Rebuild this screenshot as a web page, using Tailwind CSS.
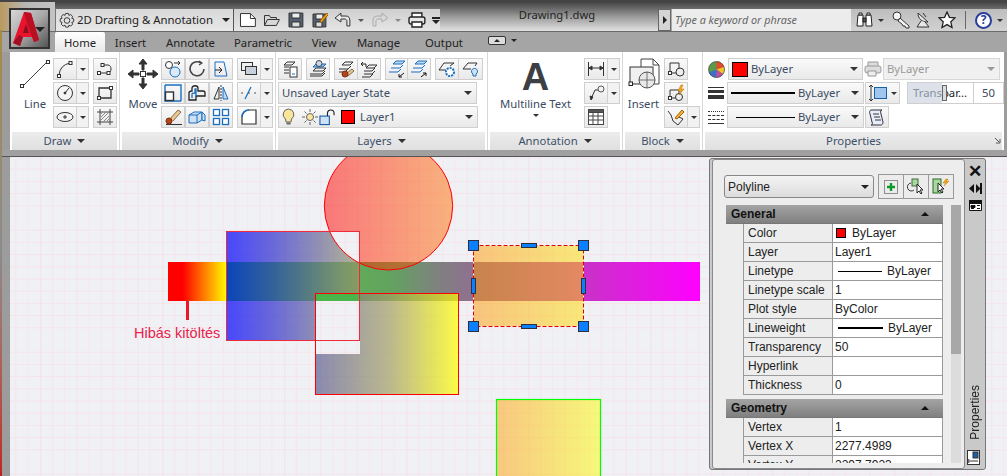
<!DOCTYPE html>
<html><head><meta charset="utf-8"><script src="https://cdn.jsdelivr.net/npm/@tailwindcss/browser@4"></script></head>
<body class="overflow-hidden bg-[#9c9c9c]">
<div class="relative w-[1007px] h-[476px] overflow-hidden flex flex-col font-['Noto_Sans','Liberation_Sans',sans-serif] text-[11.3px] text-[#222]">

<!-- title bar -->
<div class="h-[32px] flex items-end border-t-2 border-b border-[#444] border-b-[#6a6a6a] bg-linear-to-b from-[#444] via-[#9a9a9a] to-[#e2e2e2] shrink-0">
  <div class="w-[55px] h-[29px] bg-linear-to-r from-[#b89a60] via-[#b8b8b8] to-[#c4c4c4] shrink-0"></div>
  <div class="w-[178px] h-[22px] flex items-center bg-linear-to-b from-[#d8d8d8] to-[#e8e8e8] border-l border-[#777] pl-[3px] text-[11.4px] text-[#222] shrink-0">
    <svg class="w-[16px] h-[17px] mr-[2px]" viewBox="0 0 17 17" fill="none" stroke="#333"><path d="M7 1h3l.5 2 2-.8 2 2-.9 2 2 .6v3l-2 .6.9 2-2 2-2-.9-.5 2H7l-.6-2-2 .9-2-2 .9-2-2-.6v-3l2-.6-.9-2 2-2 2 .8z"/><circle cx="8.5" cy="8.5" r="3"/></svg>
    <span class="flex-1 whitespace-nowrap">2D Drafting &amp; Annotation</span>
    <span class="w-0 h-0 border-x-4 border-x-transparent border-t-4 border-t-[#222] mr-[3px]"></span>
  </div>
  <div class="w-[207px] h-[22px] flex items-center gap-[6px] pl-[5px] bg-linear-to-b from-[#cfcfcf] to-[#e6e6e6] border-l border-[#555] shrink-0">
    <svg class="w-[18px] h-[18px]" viewBox="0 0 18 18" fill="#fff" stroke="#333"><path d="M1.5 2.5h10l5 5v8h-15z"/><path d="M11.5 2.5v5h5" fill="none"/></svg>
    <svg class="w-[18px] h-[18px]" viewBox="0 0 18 18" fill="#d8d8d8" stroke="#333"><path d="M1.5 14.5v-10h5l1 2h6v2"/><path d="M1.5 14.5l3-6h12l-3 6z"/></svg>
    <svg class="w-[18px] h-[18px]" viewBox="0 0 18 18" fill="#556070" stroke="#333"><path d="M2 2h14v14H2z"/><path d="M5 2h8v5H5z" fill="#eee"/><path d="M5 11h8v5H5z" fill="#ddd"/></svg>
    <svg class="w-[18px] h-[18px]" viewBox="0 0 18 18" fill="#556070" stroke="#333"><path d="M2 3h13v13H2z"/><path d="M5 3h7v5H5z" fill="#eee"/><path d="M5 11h6v5H5z" fill="#ddd"/><path d="M9 10l7-8 1.5 1.5-7 8z" fill="#f2a21a" stroke="#a06000"/></svg>
    <svg class="w-[18px] h-[16px]" viewBox="0 0 18 16" fill="#e8e8e8" stroke="#333"><path d="M1 6l6-5v3h5c3 0 4 2 4 5v5h-3V9c0-1-1-2-2-2H7v3z"/></svg>
    <span class="w-0 h-0 border-x-[3px] border-x-transparent border-t-[3px] border-t-[#555]"></span>
    <svg class="w-[18px] h-[16px] ml-[1px]" viewBox="0 0 18 16" fill="none" stroke="#aaa"><path d="M17 6l-6-5v3H6C3 4 2 6 2 9v5h3V9c0-1 1-2 2-2h4v3z"/></svg>
    <span class="w-0 h-0 border-x-[3px] border-x-transparent border-t-[3px] border-t-[#888]"></span>
    <svg class="w-[18px] h-[17px] ml-[1px]" viewBox="0 0 18 17" fill="#fff" stroke="#222" stroke-width="1.4"><path d="M4 5V1h10v4"/><rect x="1" y="5" width="16" height="7" rx="2" fill="#e8e8e8"/><path d="M4 10h10v5H4z"/></svg>
    <span class="flex flex-col items-center gap-[1px]"><span class="w-[8px] h-[2px] bg-[#222]"></span><span class="w-0 h-0 border-x-4 border-x-transparent border-t-4 border-t-[#222]"></span></span>
  </div>
  <div class="w-[218px] h-full flex justify-center items-center pb-[3px] pl-[16px] text-[11.2px] text-[#222] shrink-0">Drawing1.dwg</div>
  <div class="w-[13px] h-[22px] flex items-center justify-center bg-[#d4d4d4] border border-[#666] shrink-0"><span class="w-0 h-0 border-y-4 border-y-transparent border-l-4 border-l-[#222]"></span></div>
  <div class="w-[180px] h-[22px] flex items-center pl-[3px] bg-[#ececec] border-l border-[#aaa] italic text-[#666] text-[10.8px] shrink-0">Type a keyword or phrase</div>
  <div class="flex-1 h-[22px] flex items-center gap-[5px] pl-[5px] bg-linear-to-b from-[#bdbdbd] to-[#d2d2d2]">
    <svg class="w-[17px] h-[16px]" viewBox="0 0 17 16" fill="#fff" stroke="#222"><path d="M2 3h5v11H1zM10 3h5l1 11h-6z"/><path d="M7 6h3v4H7z" fill="#555"/><path d="M3 1h3v2H3zM11 1h3v2h-3z"/></svg>
    <span class="w-0 h-0 border-x-[3px] border-x-transparent border-t-[3px] border-t-[#333]"></span>
    <svg class="w-[18px] h-[18px] ml-[3px]" viewBox="0 0 18 18" fill="#f4f4f4" stroke="#333"><circle cx="5" cy="5" r="4"/><path d="M8 7l9 8v2h-3l-1-2-2 0-1-2-4-3z"/></svg>
    <svg class="w-[18px] h-[18px]" viewBox="0 0 18 18" fill="#e8e8e8" stroke="#333"><path d="M3 2c0 6 4 9 10 9z"/><path d="M8 2l3 4M6 10l-4 6h12l-4-5"/></svg>
    <svg class="w-[18px] h-[18px]" viewBox="0 0 18 18" fill="#fff" stroke="#222" stroke-width="1.3"><path d="M9 1l2.4 5.3 5.6.6-4.2 3.9 1.2 5.7L9 13.6l-5 2.9 1.2-5.7L1 6.9l5.6-.6z"/></svg>
    <span class="w-[1px] h-[18px] bg-[#666] mx-[4px]"></span>
    <span class="w-[17px] h-[17px] rounded-full border-2 border-[#2a3c9c] bg-white flex items-center justify-center text-[12px] font-bold text-[#2a3c9c] leading-none">?</span>
    <span class="w-0 h-0 border-x-[3px] border-x-transparent border-t-[3px] border-t-[#333]"></span>
  </div>
</div>

<!-- logo -->
<div class="absolute left-[9px] top-[8px] w-[41px] h-[41px] border-2 border-[#333] bg-linear-to-br from-[#d8d8d8] via-[#a8a8a8] to-[#555]">
  <svg class="absolute left-[2px] top-[1px] w-[27px] h-[36px]" viewBox="0 0 27 36"><path d="M11 1L0 32l7 3 3-9h9l2 5 5-2L18 2z" fill="#e8142c"/><path d="M11 1l7 1 8 27-5 2L13 9z" fill="#b80f22"/><path d="M13 13l3 9h-6z" fill="#8a0f1c"/><path d="M0 32l7 3 3-9-4-2z" fill="#a01024"/></svg>
  <span class="absolute right-[3px] top-[17px] w-0 h-0 border-x-[5px] border-x-transparent border-t-[5px] border-t-[#222]"></span>
</div>

<!-- tabs -->
<div class="h-[20px] flex items-end bg-[#a5a5a5] text-[#222] text-[11.3px] shrink-0 pl-[55px]">
  <div class="w-[50px] h-[20px] pt-[3px] flex items-center justify-center bg-linear-to-b from-white to-[#e8e8e8] rounded-t-[2px]">Home</div>
  <div class="w-[51px] h-[20px] pt-[3px] flex items-center justify-center">Insert</div>
  <div class="w-[69px] h-[20px] pt-[3px] flex items-center justify-center">Annotate</div>
  <div class="w-[76px] h-[20px] pt-[3px] flex items-center justify-center">Parametric</div>
  <div class="w-[46px] h-[20px] pt-[3px] flex items-center justify-center">View</div>
  <div class="w-[63px] h-[20px] pt-[3px] flex items-center justify-center">Manage</div>
  <div class="w-[68px] h-[20px] pt-[3px] flex items-center justify-center">Output</div>
  <div class="ml-[10px] mb-[6px] w-[10px] h-[8px]"></div>
  <div class="mb-[7px] flex items-center gap-[5px] -ml-[10px]"><span class="w-[18px] h-[9px] rounded-[2px] bg-[#ddd] border border-[#333] flex items-center justify-center"><span class="w-0 h-0 border-x-[3px] border-x-transparent border-b-[3px] border-b-[#222]"></span></span><span class="w-0 h-0 border-x-[3px] border-x-transparent border-t-[3px] border-t-[#222]"></span></div>
</div>

<!-- ribbon -->
<div class="h-[98px] flex pl-[10px] pr-[4px] shrink-0">
  <div class="flex-1 flex bg-white">
  <!-- Draw -->
  <div class="w-[110px] flex flex-col border-r border-[#d8d8d8]">
    <div class="h-[80px] flex pt-[6px] pl-[7px]">
      <div class="w-[36px] flex flex-col items-center">
        <svg class="w-[32px] h-[32px]" viewBox="0 0 32 32" fill="#fff" stroke="#333"><path d="M3 29L29 3" stroke="#444" fill="none"/><rect x="1.5" y="26.5" width="3" height="3"/><rect x="27.5" y="2.5" width="3" height="3"/></svg>
        <span class="mt-[6px] text-[11.3px] text-[#3a4b62]">Line</span>
      </div>
      <div class="flex flex-col gap-[2px]">
        <div class="flex h-[22px]"><div class="w-[24px] flex items-center justify-center border border-[#cfcfcf] bg-linear-to-b from-[#fafafa] to-[#e9e9e9]"><svg class="w-[18px] h-[18px]" viewBox="0 0 18 18" fill="#fff" stroke="#333"><path d="M3 15Q4 5 14 3" fill="none"/><rect x="1.5" y="14.5" width="3" height="3"/><rect x="13" y="1.5" width="3" height="3"/></svg></div><div class="w-[12px] flex items-center justify-center border border-l-0 border-[#cfcfcf] bg-[#f2f2f2]"><span class="w-0 h-0 border-x-[3px] border-x-transparent border-t-[3px] border-t-[#333]"></span></div></div>
        <div class="flex h-[22px]"><div class="w-[24px] flex items-center justify-center border border-[#cfcfcf] bg-linear-to-b from-[#fafafa] to-[#e9e9e9]"><svg class="w-[18px] h-[18px]" viewBox="0 0 18 18" fill="#fff" stroke="#333"><circle cx="9" cy="9" r="7.5" fill="#f4f4f4"/><path d="M9 9l4-5" /><circle cx="9" cy="9" r="1" fill="#333"/></svg></div><div class="w-[12px] flex items-center justify-center border border-l-0 border-[#cfcfcf] bg-[#f2f2f2]"><span class="w-0 h-0 border-x-[3px] border-x-transparent border-t-[3px] border-t-[#333]"></span></div></div>
        <div class="flex h-[22px]"><div class="w-[24px] flex items-center justify-center border border-[#cfcfcf] bg-linear-to-b from-[#fafafa] to-[#e9e9e9]"><svg class="w-[18px] h-[18px]" viewBox="0 0 18 18" fill="#fff" stroke="#333"><ellipse cx="9" cy="9" rx="8" ry="4.5" fill="#f4f4f4"/><path d="M7 9h4M9 7v4"/></svg></div><div class="w-[12px] flex items-center justify-center border border-l-0 border-[#cfcfcf] bg-[#f2f2f2]"><span class="w-0 h-0 border-x-[3px] border-x-transparent border-t-[3px] border-t-[#333]"></span></div></div>
      </div>
      <div class="flex flex-col gap-[2px] ml-[4px]">
        <div class="w-[24px] h-[22px] flex items-center justify-center border border-[#cfcfcf] bg-linear-to-b from-[#fafafa] to-[#e9e9e9]"><svg class="w-[18px] h-[18px]" viewBox="0 0 18 18" fill="#fff" stroke="#333"><path d="M3 13h9c4 0 4-8 0-8H7" fill="none"/><rect x="1.5" y="11.5" width="3" height="3"/><rect x="11" y="11.5" width="3" height="3"/><rect x="5" y="3.5" width="3" height="3"/></svg></div>
        <div class="w-[24px] h-[22px] flex items-center justify-center border border-[#cfcfcf] bg-linear-to-b from-[#fafafa] to-[#e9e9e9]"><svg class="w-[18px] h-[18px]" viewBox="0 0 18 18" fill="#fff" stroke="#333"><path d="M3 4h12v10H3z" stroke-width="1.3" fill="none"/><rect x="1.5" y="12.5" width="3" height="3"/><rect x="13.5" y="2.5" width="3" height="3"/></svg></div>
        <div class="w-[24px] h-[22px] flex items-center justify-center border border-[#cfcfcf] bg-linear-to-b from-[#fafafa] to-[#e9e9e9]"><svg class="w-[18px] h-[18px]" viewBox="0 0 18 18" fill="none" stroke="#444"><path d="M1 4h16M1 14h16M4 1v16M14 1v16"/><path d="M5 12l8-8M5 9l5-5M8 13l5-5M11 13l2-2M5 6l1-1" stroke="#888"/></svg></div>
      </div>
    </div>
    <div class="h-[18px] mx-[2px] flex items-center justify-center gap-[6px] bg-linear-to-b from-[#ececec] to-[#e0e0e0] text-[11.3px] text-[#3d5068]">Draw <span class="w-0 h-0 border-x-[4px] border-x-transparent border-t-[4px] border-t-[#333]"></span></div>
  </div>
  <!-- Modify -->
  <div class="w-[156px] flex flex-col border-r border-[#d8d8d8]">
    <div class="h-[80px] flex pt-[6px] pl-[5px]">
      <div class="w-[36px] flex flex-col items-center">
        <svg class="w-[32px] h-[32px]" viewBox="0 0 32 32" fill="#333" stroke="#333"><path d="M16 1l4 5h-3v6h-2V6h-3zM16 31l4-5h-3v-6h-2v6h-3zM1 16l5-4v3h6v2H6v3zM31 16l-5-4v3h-6v2h6v3z"/><rect x="13.5" y="13.5" width="5" height="5" fill="#fff"/></svg>
        <span class="mt-[6px] text-[11.3px] text-[#3a4b62]">Move</span>
      </div>
      <div class="grid grid-cols-[24px_24px_24px] grid-rows-[22px_22px_22px] gap-y-[2px]">
        <div class="flex items-center justify-center border border-[#cfcfcf] bg-linear-to-b from-[#fafafa] to-[#e9e9e9]"><svg class="w-[18px] h-[18px]" viewBox="0 0 18 18" fill="#fff" stroke="#333"><circle cx="5" cy="5" r="3.5"/><circle cx="11" cy="12" r="5" stroke="#1a6fc0" fill="#dce9f8"/><path d="M10 3h6l-2-2M16 3l-2 2" fill="none"/></svg></div>
        <div class="flex items-center justify-center border border-[#cfcfcf] bg-linear-to-b from-[#fafafa] to-[#e9e9e9]"><svg class="w-[18px] h-[18px]" viewBox="0 0 18 18" fill="none" stroke="#444" stroke-width="1.6"><path d="M13 3a7 7 0 1 0 3 6"/><path d="M11 1l3 2-3 2" stroke-width="1.2"/></svg></div>
        <div class="flex items-center justify-center border border-[#cfcfcf] bg-linear-to-b from-[#fafafa] to-[#e9e9e9]"><svg class="w-[18px] h-[18px]" viewBox="0 0 18 18" fill="none" stroke="#1a6fc0"><path d="M3 2h9l3 14H3z"/><path d="M3 10h7M7 7l3 3-3 3" stroke="#222"/></svg></div>
        <div class="flex items-center justify-center border border-[#cfcfcf] bg-linear-to-b from-[#fafafa] to-[#e9e9e9]"><svg class="w-[18px] h-[18px]" viewBox="0 0 18 18" fill="none" stroke="#1a6fc0" stroke-width="1.4"><path d="M1 1h16v16"/><path d="M1 1v16h16" stroke="#1a6fc0"/><rect x="1.5" y="8" width="8" height="8.5" stroke="#333" fill="#fff"/></svg></div>
        <div class="flex items-center justify-center border border-[#cfcfcf] bg-linear-to-b from-[#fafafa] to-[#e9e9e9]"><svg class="w-[18px] h-[18px]" viewBox="0 0 18 18" fill="none" stroke="#222" stroke-width="1.3"><path d="M1 16V9c0-2 3-2 3-2V4c0-3 6-3 6 0v3h5c2 0 2 2 2 2v3H8v4z"/><path d="M4 14v-4c0-1 3-1 3-1V5h1v7" stroke="#1a6fc0"/></svg></div>
        <div class="flex items-center justify-center border border-[#cfcfcf] bg-linear-to-b from-[#fafafa] to-[#e9e9e9]"><svg class="w-[18px] h-[18px]" viewBox="0 0 18 18" fill="none" stroke="#333"><path d="M9 1v16" stroke-dasharray="2 1"/><path d="M7 3v12H2z"/><path d="M11 3v12h5z" stroke="#1a6fc0" fill="#bcd6f0"/></svg></div>
        <div class="flex items-center justify-center border border-[#cfcfcf] bg-linear-to-b from-[#fafafa] to-[#e9e9e9]"><svg class="w-[20px] h-[18px]" viewBox="0 0 20 18" fill="none" stroke="#333"><path d="M3 16.5h16"/><path d="M6 12L15 2l3 2-8 9" fill="#e7c89a" stroke="#8a6a3a"/><circle cx="6" cy="13" r="3" fill="#b5461a" stroke="#7a3010"/></svg></div>
        <div class="flex items-center justify-center border border-[#cfcfcf] bg-linear-to-b from-[#fafafa] to-[#e9e9e9]"><svg class="w-[18px] h-[18px]" viewBox="0 0 18 18" fill="#cfe0f3" stroke="#1a6fc0"><path d="M1 7l5-3h8v8l-5 3H1z"/><path d="M1 7h8v8M9 7l5-3" fill="none"/><path d="M14 4l3 3v6l-3-1z"/></svg></div>
        <div class="flex items-center justify-center border border-[#cfcfcf] bg-linear-to-b from-[#fafafa] to-[#e9e9e9]"><svg class="w-[18px] h-[18px]" viewBox="0 0 18 18" fill="#fff" stroke="#1a6fc0" stroke-width="1.3"><rect x="1.5" y="1.5" width="6" height="6"/><rect x="10.5" y="1.5" width="6" height="6"/><rect x="1.5" y="10.5" width="6" height="6"/><rect x="10.5" y="10.5" width="6" height="6"/></svg></div>
      </div>
      <div class="flex flex-col gap-[2px] ml-[4px]">
        <div class="flex h-[22px]"><div class="w-[24px] flex items-center justify-center border border-[#cfcfcf] bg-linear-to-b from-[#fafafa] to-[#e9e9e9]"><svg class="w-[18px] h-[18px]" viewBox="0 0 18 18" fill="#c8d0da" stroke="#333"><rect x="1.5" y="2.5" width="11" height="8" fill="#eee"/><rect x="5.5" y="6.5" width="11" height="8"/></svg></div><div class="w-[12px] flex items-center justify-center border border-l-0 border-[#cfcfcf] bg-[#f2f2f2]"><span class="w-0 h-0 border-x-[3px] border-x-transparent border-t-[3px] border-t-[#333]"></span></div></div>
        <div class="flex h-[22px]"><div class="w-[24px] flex items-center justify-center border border-[#cfcfcf] bg-linear-to-b from-[#fafafa] to-[#e9e9e9]"><svg class="w-[18px] h-[18px]" viewBox="0 0 18 18" fill="none" stroke="#1a6fc0"><path d="M1 9h3M14 9h3M8 9h2" stroke="#555" stroke-dasharray="2 1"/><path d="M5 15L11 3" stroke-width="1.3"/></svg></div><div class="w-[12px] flex items-center justify-center border border-l-0 border-[#cfcfcf] bg-[#f2f2f2]"><span class="w-0 h-0 border-x-[3px] border-x-transparent border-t-[3px] border-t-[#333]"></span></div></div>
        <div class="flex h-[22px]"><div class="w-[24px] flex items-center justify-center border border-[#cfcfcf] bg-linear-to-b from-[#fafafa] to-[#e9e9e9]"><svg class="w-[18px] h-[18px]" viewBox="0 0 18 18" fill="#fff" stroke="#333" stroke-width="1.2"><path d="M2 16V9c0-4 3-7 7-7h7v14z" fill="#fff"/><path d="M2 9c0-4 3-7 7-7" stroke="#1a6fc0" stroke-width="1.6" fill="none"/></svg></div><div class="w-[12px] flex items-center justify-center border border-l-0 border-[#cfcfcf] bg-[#f2f2f2]"><span class="w-0 h-0 border-x-[3px] border-x-transparent border-t-[3px] border-t-[#333]"></span></div></div>
      </div>
    </div>
    <div class="h-[18px] mx-[2px] flex items-center justify-center gap-[6px] bg-linear-to-b from-[#ececec] to-[#e0e0e0] text-[11.3px] text-[#3d5068]">Modify <span class="w-0 h-0 border-x-[4px] border-x-transparent border-t-[4px] border-t-[#333]"></span></div>
  </div>
  <!-- Layers -->
  <div class="w-[212px] flex flex-col border-r border-[#d8d8d8]">
    <div class="h-[80px] flex flex-col gap-[2px] pt-[6px] pl-[2px]">
      <div class="flex h-[22px] gap-[4px]">
        <div class="w-[24px] flex items-center justify-center border border-[#cfcfcf] bg-linear-to-b from-[#fafafa] to-[#e9e9e9]"><svg class="w-[18px] h-[18px]" viewBox="0 0 18 18" fill="none" stroke="#333"><path d="M6 2h8l-3 3H3zM3 7h5M3 10h5M3 13h5"/><rect x="9" y="7" width="7" height="10" fill="#fff"/><path d="M11 14h3" stroke="#1a6fc0"/></svg></div>
        <div class="w-[24px] flex items-center justify-center border border-[#cfcfcf] bg-linear-to-b from-[#fafafa] to-[#e9e9e9]"><svg class="w-[18px] h-[18px]" viewBox="0 0 18 18" fill="none" stroke="#333"><path d="M4 11h10l3-3H7zM1 14h12l3-3M1 16h12l3-3"/><path d="M4 7h10l3-3H7z" fill="#8ec0ea" stroke="#1a6fc0"/><circle cx="10" cy="3.5" r="3" fill="#cfd8e2" stroke="#445"/></svg></div>
        <div class="flex">
          <div class="w-[24px] flex items-center justify-center border border-[#cfcfcf] bg-linear-to-b from-[#fafafa] to-[#e9e9e9]"><svg class="w-[18px] h-[18px]" viewBox="0 0 18 18" fill="none" stroke="#333"><path d="M5 5h8l3-3H8zM2 9h9l3-3M2 12h6l3-3"/><path d="M9 14l6-5 2 2-6 5z" fill="#e7c89a" stroke="#8a6a3a"/><circle cx="8" cy="14" r="3" fill="#b5461a" stroke="#7a3010"/></svg></div>
          <div class="w-[23px] flex items-center justify-center border border-l-0 border-[#cfcfcf] bg-linear-to-b from-[#fafafa] to-[#e9e9e9]"><svg class="w-[18px] h-[18px]" viewBox="0 0 18 18" fill="none" stroke="#333"><path d="M6 8h8l3-3H9zM4 11h8l3-3M4 14h8l3-3M2 17h8l3-3"/><path d="M1 4h5M1 4l2-2M1 4l2 2M6 4v3" stroke="#222"/></svg></div>
        </div>
        <div class="flex">
          <div class="w-[23px] flex items-center justify-center border border-[#cfcfcf] bg-linear-to-b from-[#fafafa] to-[#e9e9e9]"><svg class="w-[18px] h-[18px]" viewBox="0 0 18 18" fill="none" stroke="#333"><path d="M5 4h9l3-3H8z" stroke="#1a6fc0" fill="#bcd6f0"/><path d="M3 8h9l3-3" stroke="#1a6fc0"/><path d="M1 12h9l3-3" stroke="#1a6fc0"/><path d="M11 17l5-4M11 14v3h3" stroke="#111"/></svg></div>
          <div class="w-[23px] flex items-center justify-center border border-l-0 border-[#cfcfcf] bg-linear-to-b from-[#fafafa] to-[#e9e9e9]"><svg class="w-[18px] h-[18px]" viewBox="0 0 18 18" fill="none" stroke="#333"><path d="M5 4h9l3-3H8z" stroke="#1a6fc0" fill="#bcd6f0"/><path d="M3 8h9l3-3" stroke="#1a6fc0"/><path d="M1 12h9l3-3" stroke="#1a6fc0"/><path d="M11 17l5-4M13 13h3v3" stroke="#111"/></svg></div>
        </div>
        <div class="flex">
          <div class="w-[24px] flex items-center justify-center border border-[#cfcfcf] bg-linear-to-b from-[#fafafa] to-[#e9e9e9]"><svg class="w-[18px] h-[18px]" viewBox="0 0 18 18" fill="none" stroke="#333"><path d="M1 10L6 3h10l-4 3"/><path d="M1 10h7"/><circle cx="12" cy="12" r="4" stroke="#1a6fc0" stroke-width="2" stroke-dasharray="2 1" fill="#fff"/></svg></div>
          <div class="w-[24px] flex items-center justify-center border border-l-0 border-[#cfcfcf] bg-linear-to-b from-[#fafafa] to-[#e9e9e9]"><svg class="w-[18px] h-[18px]" viewBox="0 0 18 18" fill="none" stroke="#333"><path d="M1 9l5-6h9l-2 3"/><path d="M1 9h8"/><path d="M11 14a3 3 0 1 1 3 0v2h-3z" stroke="#1a6fc0" fill="#cfe2f5"/></svg></div>
        </div>
      </div>
      <div class="w-[199px] h-[22px] flex items-center justify-between pl-[3px] pr-[4px] border border-[#cfcfcf] bg-linear-to-b from-[#fafafa] to-[#e9e9e9] text-[11.3px] text-[#3a4b62]">Unsaved Layer State <span class="w-0 h-0 border-x-[4px] border-x-transparent border-t-[4px] border-t-[#333]"></span></div>
      <div class="w-[200px] h-[22px] flex items-center pl-[3px] pr-[4px] border border-[#cfcfcf] bg-linear-to-b from-[#fafafa] to-[#e9e9e9] text-[11.3px] text-[#3a4b62]">
        <svg class="w-[13px] h-[18px] mr-[7px]" viewBox="0 0 13 18" fill="#f8e59a" stroke="#666"><path d="M6.5 1a5.5 5.5 0 0 1 3 10l-.5 3H4l-.5-3a5.5 5.5 0 0 1 3-10z"/><path d="M4.5 15.5h4" stroke-width="2"/></svg>
        <svg class="w-[16px] h-[16px] mr-[1px]" viewBox="0 0 16 16" fill="#f8e7a0" stroke="#666"><circle cx="8" cy="8" r="3.5"/><path d="M8 0v3M8 13v3M0 8h3M13 8h3M2.5 2.5l2 2M11.5 11.5l2 2M2.5 13.5l2-2M11.5 4.5l2-2"/></svg>
        <svg class="w-[16px] h-[17px] mr-[6px]" viewBox="0 0 17 17" fill="#cfe2f5" stroke="#1a5fa8" stroke-width="1.2"><rect x="1" y="7" width="10" height="9"/><path d="M9 7V4a3 3 0 0 1 7 0v2" fill="none" stroke="#222"/></svg>
        <span class="w-[14px] h-[14px] bg-[#ff0000] border border-black mr-[5px]"></span>
        <span class="flex-1">Layer1</span>
        <span class="w-0 h-0 border-x-[4px] border-x-transparent border-t-[4px] border-t-[#333]"></span>
      </div>
    </div>
    <div class="h-[18px] mx-[2px] flex items-center justify-center gap-[6px] bg-linear-to-b from-[#ececec] to-[#e0e0e0] text-[11.3px] text-[#3d5068]">Layers <span class="w-0 h-0 border-x-[4px] border-x-transparent border-t-[4px] border-t-[#333]"></span></div>
  </div>
  <!-- Annotation -->
  <div class="w-[135px] flex flex-col border-r border-[#d8d8d8]">
    <div class="h-[80px] flex pt-[6px]">
      <div class="w-[95px] flex flex-col items-center">
        <span class="h-[36px] text-[38px] leading-[36px] font-bold text-[#3c3f44] font-['Liberation_Sans',sans-serif] mt-[1px]">A</span>
        <span class="text-[11.3px] text-[#3a4b62] leading-[14px] mt-[2px]">Multiline Text</span>
        <span class="w-0 h-0 border-x-[3px] border-x-transparent border-t-[3px] border-t-[#333] mt-[3px]"></span>
      </div>
      <div class="flex flex-col gap-[2px] ml-[1px]">
        <div class="flex h-[22px]"><div class="w-[24px] flex items-center justify-center border border-[#cfcfcf] bg-linear-to-b from-[#fafafa] to-[#e9e9e9]"><svg class="w-[18px] h-[18px]" viewBox="0 0 18 18" fill="none" stroke="#333"><path d="M1.5 2v14M16.5 2v14M2 8h14"/><path d="M2 8l3-2v4zM16 8l-3-2v4z" fill="#333"/></svg></div><div class="w-[12px] flex items-center justify-center border border-l-0 border-[#cfcfcf] bg-[#f2f2f2]"><span class="w-0 h-0 border-x-[3px] border-x-transparent border-t-[3px] border-t-[#333]"></span></div></div>
        <div class="flex h-[22px]"><div class="w-[24px] flex items-center justify-center border border-[#cfcfcf] bg-linear-to-b from-[#fafafa] to-[#e9e9e9]"><svg class="w-[18px] h-[18px]" viewBox="0 0 18 18" fill="none" stroke="#333"><circle cx="14" cy="5" r="3" stroke="#555"/><path d="M11 6H8L4 15"/><path d="M4 16l-1-4 3 1z" fill="#333"/></svg></div><div class="w-[12px] flex items-center justify-center border border-l-0 border-[#cfcfcf] bg-[#f2f2f2]"><span class="w-0 h-0 border-x-[3px] border-x-transparent border-t-[3px] border-t-[#333]"></span></div></div>
        <div class="w-[24px] h-[22px] flex items-center justify-center border border-[#cfcfcf] bg-linear-to-b from-[#fafafa] to-[#e9e9e9]"><svg class="w-[18px] h-[18px]" viewBox="0 0 18 18" fill="#fff" stroke="#444"><rect x="1.5" y="1.5" width="15" height="15"/><path d="M1.5 1.5h15v3h-15z" fill="#555"/><path d="M1.5 8h15M1.5 12h15M6 4.5v12M11 4.5v12"/></svg></div>
      </div>
    </div>
    <div class="h-[18px] mx-[2px] flex items-center justify-center gap-[6px] bg-linear-to-b from-[#ececec] to-[#e0e0e0] text-[11.3px] text-[#3d5068]">Annotation <span class="w-0 h-0 border-x-[4px] border-x-transparent border-t-[4px] border-t-[#333]"></span></div>
  </div>
  <!-- Block -->
  <div class="w-[80px] flex flex-col border-r border-[#d8d8d8]">
    <div class="h-[80px] flex pt-[6px]">
      <div class="w-[41px] flex flex-col items-center">
        <svg class="w-[32px] h-[32px]" viewBox="0 0 32 32" fill="#fff" stroke="#444"><path d="M13 1h12l6 6v19H13z"/><path d="M25 1v6h6" fill="none"/><rect x="2" y="9" width="23" height="17" fill="#f0f0f0" stroke="#333"/><rect x="1" y="24" width="3.5" height="3.5" stroke="#222"/><circle cx="19" cy="22" r="8" fill="#e8e8e8" stroke="#555"/><path d="M19 14v16M11 22h16" stroke-width=".7"/></svg>
        <span class="mt-[6px] text-[11.3px] text-[#3a4b62]">Insert</span>
      </div>
      <div class="flex flex-col gap-[2px]">
        <div class="w-[24px] h-[22px] flex items-center justify-center border border-[#cfcfcf] bg-linear-to-b from-[#fafafa] to-[#e9e9e9]"><svg class="w-[18px] h-[18px]" viewBox="0 0 18 18" fill="#fff" stroke="#333"><path d="M3 3h9v10H3z" fill="none"/><rect x="1.5" y="11.5" width="3" height="3"/><circle cx="13" cy="12" r="4" fill="#eee"/></svg></div>
        <div class="w-[24px] h-[22px] flex items-center justify-center border border-[#cfcfcf] bg-linear-to-b from-[#fafafa] to-[#e9e9e9]"><svg class="w-[18px] h-[18px]" viewBox="0 0 18 18" fill="#fff" stroke="#333"><path d="M3 6h9v8H3z" fill="none"/><rect x="1.5" y="12.5" width="3" height="3"/><circle cx="12" cy="13" r="3.5" fill="#eee"/><path d="M14 1l-3 6h3l-2 4 5-6h-3l2-4z" fill="#f5a623" stroke="#c47a00" stroke-width=".6"/></svg></div>
        <div class="flex h-[22px]"><div class="w-[24px] flex items-center justify-center border border-[#cfcfcf] bg-linear-to-b from-[#fafafa] to-[#e9e9e9]"><svg class="w-[18px] h-[18px]" viewBox="0 0 18 18" fill="none" stroke="#333"><path d="M1 3l3 4 2 6 5 4 5-6-6-3"/><path d="M8 10l7-8 2 2-7 7z" fill="#f3b33d" stroke="#a06000"/></svg></div><div class="w-[12px] flex items-center justify-center border border-l-0 border-[#cfcfcf] bg-[#f2f2f2]"><span class="w-0 h-0 border-x-[3px] border-x-transparent border-t-[3px] border-t-[#333]"></span></div></div>
      </div>
    </div>
    <div class="h-[18px] mx-[2px] flex items-center justify-center gap-[6px] bg-linear-to-b from-[#ececec] to-[#e0e0e0] text-[11.3px] text-[#3d5068]">Block <span class="w-0 h-0 border-x-[4px] border-x-transparent border-t-[4px] border-t-[#333]"></span></div>
  </div>
  <!-- Properties -->
  <div class="flex-1 flex flex-col">
    <div class="h-[80px] flex flex-col gap-[2px] pt-[6px] pl-[5px]">
      <div class="flex h-[22px] items-center">
        <svg class="w-[17px] h-[17px] mr-[3px] shrink-0" viewBox="0 0 17 17"><circle cx="8.5" cy="8.5" r="8" fill="#5a9a4a"/><path d="M8.5 8.5V.5A8 8 0 0 1 16 6z" fill="#e34a2a"/><path d="M8.5 8.5L16 6a8 8 0 0 1-1 7z" fill="#f4c324"/><path d="M8.5 8.5L15 13a8 8 0 0 1-7 3.5z" fill="#c04ea0"/><path d="M8.5 8.5L8 16.5a8 8 0 0 1-7-5z" fill="#3a6fc8"/><circle cx="8.5" cy="8.5" r="8" fill="none" stroke="#444" stroke-width=".7"/></svg>
        <div class="w-[135px] h-[22px] flex items-center pl-[3px] pr-[4px] border border-[#cfcfcf] bg-linear-to-b from-[#fafafa] to-[#e9e9e9] text-[11.3px] text-[#3a4b62]"><span class="w-[16px] h-[15px] bg-[#ff0000] border border-black mr-[3px]"></span><span class="flex-1">ByLayer</span><span class="w-0 h-0 border-x-[4px] border-x-transparent border-t-[4px] border-t-[#333]"></span></div>
        <svg class="w-[18px] h-[17px] mx-[1px] shrink-0" viewBox="0 0 18 17" fill="#ddd" stroke="#999"><path d="M4 5V1h10v4"/><rect x="1" y="5" width="16" height="7" rx="2"/><path d="M4 10h8v5H4z" fill="#eee"/></svg>
        <div class="w-[117px] h-[22px] flex items-center pl-[3px] pr-[4px] border border-[#d8d8d8] bg-[#f0f0f0] text-[11.3px] text-[#999]"><span class="flex-1">ByLayer</span><span class="w-0 h-0 border-x-[4px] border-x-transparent border-t-[4px] border-t-[#999]"></span></div>
      </div>
      <div class="flex h-[22px] items-center">
        <div class="w-[16px] mr-[3px] flex flex-col gap-[2px] shrink-0"><span class="h-[1px] bg-[#333]"></span><span class="h-[3px] bg-[#333]"></span><span class="h-[4px] bg-[#333]"></span></div>
        <div class="w-[137px] h-[22px] flex items-center pl-[3px] pr-[4px] border border-[#cfcfcf] bg-linear-to-b from-[#fafafa] to-[#e9e9e9] text-[11.3px] text-[#3a4b62]"><span class="w-[64px] h-[2px] bg-black mr-[3px]"></span><span class="flex-1">ByLayer</span><span class="w-0 h-0 border-x-[4px] border-x-transparent border-t-[4px] border-t-[#333]"></span></div>
        <div class="w-[35px] h-[22px] ml-[1px] flex items-center gap-[4px] pl-[3px] border border-[#cfcfcf] bg-linear-to-b from-[#fafafa] to-[#e9e9e9] shrink-0"><svg class="w-[18px] h-[18px]" viewBox="0 0 18 18" fill="#9ec6ee" stroke="#1a5fa8"><rect x="5.5" y="3.5" width="12" height="11"/><path d="M2 1v16M0 3l2-2 2 2M0 15l2 2 2-2" fill="none" stroke="#333"/></svg><span class="w-0 h-0 border-x-[3px] border-x-transparent border-t-[3px] border-t-[#333]"></span></div>
        <div class="w-[97px] h-[22px] ml-[7px] flex border border-[#cfcfcf] bg-white shrink-0"><div class="w-[66px] relative flex items-center bg-[#fff] border-r border-[#cfcfcf] pl-[5px] text-[11.3px] text-[#222] overflow-hidden"><span class="absolute left-0 top-0 bottom-0 w-[34px] bg-[#dde2ea]"></span><span class="relative whitespace-nowrap"><span class="text-[#8a92a0]">Trans</span>par...</span><span class="absolute left-[34px] top-[2px] w-[5px] h-[16px] bg-[#ddd] border border-[#666]"></span></div><div class="flex-1 flex items-center justify-center text-[11.3px] text-[#3a4b62]">50</div></div>
      </div>
      <div class="flex h-[22px] items-center">
        <div class="w-[16px] mr-[3px] flex flex-col gap-[3px] shrink-0"><span class="h-[1px] border-t border-dotted border-[#333]"></span><span class="h-[1px] border-t border-dashed border-[#333]"></span><span class="h-[1px] border-t border-dashed border-[#333]"></span><span class="h-[1px] border-t border-[#333]"></span></div>
        <div class="w-[137px] h-[22px] flex items-center pl-[8px] pr-[4px] border border-[#cfcfcf] bg-linear-to-b from-[#fafafa] to-[#e9e9e9] text-[11.3px] text-[#3a4b62]"><span class="w-[59px] h-[1px] bg-black mr-[3px]"></span><span class="flex-1">ByLayer</span><span class="w-0 h-0 border-x-[4px] border-x-transparent border-t-[4px] border-t-[#333]"></span></div>
        <div class="w-[24px] h-[22px] ml-[1px] flex items-center justify-center border border-[#cfcfcf] bg-linear-to-b from-[#fafafa] to-[#e9e9e9]"><svg class="w-[18px] h-[18px]" viewBox="0 0 18 18" fill="#e8eef5" stroke="#334"><path d="M3 2h11c-1 0-2 1-1 4l2 8c0 2-1 3-2 3H3c1 0 2-1 1-3L2 6C1 4 2 2 3 2z"/><path d="M5 6h6M6 9h6M7 12h6" fill="none"/></svg></div>
      </div>
    </div>
    <div class="h-[18px] mx-[2px] relative flex items-center justify-center bg-linear-to-b from-[#ececec] to-[#e0e0e0] text-[11.3px] text-[#3d5068]">Properties<svg class="absolute right-[1px] top-[5px] w-[7px] h-[7px]" viewBox="0 0 7 7" fill="none" stroke="#555"><path d="M1 1l4 4M6 2v4H2"/></svg></div>
  </div>
  </div>
</div>

<!-- separator -->
<div class="h-[7px] shrink-0 bg-[#a0a0a0] border-b border-[#555]"></div>

<!-- canvas -->
<div class="flex-1 relative ml-[10px] overflow-hidden bg-[#f0f1f5]">
  <svg class="absolute left-0 top-0 w-[997px] h-[319px]" viewBox="10 157 997 319" xmlns="http://www.w3.org/2000/svg">
    <defs>
      <pattern id="grid" patternUnits="userSpaceOnUse" x="40.3" y="96" width="122" height="122">
        <path d="M12.2 0v122M24.4 0v122M36.6 0v122M48.8 0v122M61 0v122M73.2 0v122M85.4 0v122M97.6 0v122M109.8 0v122M0 12.2h122M0 24.4h122M0 36.6h122M0 48.8h122M0 61h122M0 73.2h122M0 85.4h122M0 97.6h122M0 109.8h122" stroke="#f6e4ea" stroke-width="1" fill="none"/>
        <path d="M0 0v122M0 0h122" stroke="#f6d6e2" stroke-width="1.2" fill="none"/>
      </pattern>
      <linearGradient id="g1" gradientUnits="userSpaceOnUse" x1="168" x2="227" y1="0" y2="0"><stop offset="0" stop-color="#ff0000"/><stop offset=".25" stop-color="#ff0000"/><stop offset="1" stop-color="#ffff00"/></linearGradient>
      <linearGradient id="gbar" gradientUnits="userSpaceOnUse" x1="227" x2="700" y1="0" y2="0"><stop offset="0" stop-color="rgb(40,233,20)"/><stop offset=".245" stop-color="rgb(95,190,60)"/><stop offset=".28" stop-color="rgb(98,170,90)"/><stop offset=".345" stop-color="rgb(98,163,95)"/><stop offset=".45" stop-color="rgb(128,128,128)"/><stop offset=".52" stop-color="rgb(144,112,144)"/><stop offset=".755" stop-color="rgb(200,50,200)"/><stop offset="1" stop-color="rgb(255,0,255)"/></linearGradient>
      <linearGradient id="gblue" gradientUnits="userSpaceOnUse" x1="227" x2="360" y1="0" y2="0"><stop offset="0" stop-color="rgb(0,0,255)"/><stop offset=".35" stop-color="rgb(48,48,204)"/><stop offset=".88" stop-color="rgb(135,135,124)"/><stop offset="1" stop-color="rgb(150,150,100)"/></linearGradient>
      <linearGradient id="gyel" gradientUnits="userSpaceOnUse" x1="316" x2="458" y1="0" y2="0"><stop offset="0" stop-color="rgb(94,94,147)"/><stop offset=".52" stop-color="rgb(163,160,98)"/><stop offset="1" stop-color="rgb(255,255,0)"/></linearGradient>
      <linearGradient id="gcirc" gradientUnits="userSpaceOnUse" x1="324" x2="453" y1="0" y2="0"><stop offset="0" stop-color="rgb(255,0,0)"/><stop offset="1" stop-color="rgb(255,115,7)"/></linearGradient>
      <linearGradient id="gsel" gradientUnits="userSpaceOnUse" x1="473" x2="584" y1="0" y2="0"><stop offset="0" stop-color="rgb(255,151,7)"/><stop offset="1" stop-color="rgb(255,223,0)"/></linearGradient>
      <linearGradient id="ggrn" gradientUnits="userSpaceOnUse" x1="497" x2="600" y1="0" y2="0"><stop offset="0" stop-color="rgb(255,159,11)"/><stop offset="1" stop-color="rgb(252,255,3)"/></linearGradient>
      <mask id="mblue" maskUnits="userSpaceOnUse" x="0" y="0" width="1100" height="600"><rect x="0" y="0" width="1100" height="600" fill="#fff"/><circle cx="388.5" cy="205.8" r="64.2" fill="#000"/><rect x="316" y="301" width="50" height="50" fill="#000"/><rect x="316" y="294" width="44" height="7" fill="#000"/></mask>
      <mask id="mcirc" maskUnits="userSpaceOnUse" x="0" y="0" width="1100" height="600"><rect x="0" y="0" width="1100" height="600" fill="#fff"/><rect x="227" y="232" width="133" height="109" fill="#000"/></mask>
      <mask id="myel" maskUnits="userSpaceOnUse" x="0" y="0" width="1100" height="600"><rect x="0" y="0" width="1100" height="600" fill="#fff"/><rect x="300" y="294" width="60" height="60" fill="#000"/></mask>
    </defs>
    <rect x="10" y="157" width="997" height="319" fill="url(#grid)"/>
    <rect x="227" y="262" width="473" height="39" fill="url(#gbar)"/>
    <rect x="168" y="262" width="59" height="39" fill="url(#g1)"/>
    <rect x="227" y="232" width="133" height="109" fill="url(#gblue)" fill-opacity=".7" mask="url(#mblue)"/>
    <circle cx="388.5" cy="205.8" r="64.2" fill="url(#gcirc)" fill-opacity=".5" mask="url(#mcirc)"/>
    <circle cx="388.5" cy="205.8" r="64.2" fill="none" stroke="#ff0000"/>
    <rect x="316" y="294" width="142" height="101" fill="url(#gyel)" fill-opacity=".7" mask="url(#myel)"/>
    <rect x="316" y="294" width="44" height="7" fill="#4ab54a"/>
    <rect x="226.5" y="231.5" width="133" height="109" fill="none" stroke="#ee2a3c"/>
    <rect x="315.5" y="293.5" width="143" height="101" fill="none" stroke="#ff0000"/>
    <rect x="473.5" y="245.5" width="110" height="81" fill="url(#gsel)" fill-opacity=".5"/>
    <rect x="473.5" y="245.5" width="110" height="81" fill="none" stroke="#fff"/>
    <rect x="473.5" y="245.5" width="110" height="81" fill="none" stroke="#e00000" stroke-dasharray="4 2"/>
    <rect x="496.5" y="399.5" width="104" height="90" fill="url(#ggrn)" fill-opacity=".5" stroke="#00ff00" stroke-width="1.2"/>
    <rect x="186" y="301" width="3" height="19" fill="#e8172b"/>
    <g fill="#0a80ff" stroke="#2a3040">
      <rect x="468.5" y="240.5" width="10" height="10"/><rect x="578.5" y="240.5" width="10" height="10"/><rect x="468.5" y="321.5" width="10" height="10"/><rect x="578.5" y="321.5" width="10" height="10"/>
      <rect x="521.5" y="243.5" width="15" height="4"/><rect x="521.5" y="324.5" width="15" height="4"/><rect x="471.5" y="278.5" width="4" height="15"/><rect x="581.5" y="278.5" width="4" height="15"/>
    </g>
    <text x="134" y="338" font-family="Liberation Sans" font-size="14.5" fill="#e8224a">Hibás kitöltés</text>
  </svg>

  <!-- Properties palette window -->
  <div class="absolute left-[699px] top-[1px] w-[277px] h-[312px] flex rounded-[3px] border border-[#777] bg-[#c9c9c9]">
    <div class="w-[253px] h-full ml-[2px] rounded-[3px] border border-[#8a8a8a] bg-[#ededed] pl-[11px] pt-[14px] font-['Liberation_Sans',sans-serif]">
      <div class="flex items-center h-[25px]">
        <div class="w-[150px] h-[23px] flex items-center pl-[3px] pr-[4px] border border-[#888] rounded-[3px] bg-linear-to-b from-[#f4f4f4] to-[#dcdcdc] text-[12px] text-[#222]"><span class="flex-1">Polyline</span><span class="w-0 h-0 border-x-[4px] border-x-transparent border-t-[4px] border-t-[#222]"></span></div>
        <div class="flex ml-[4px] h-[25px] border border-[#999] bg-[#ececec]">
          <div class="w-[25px] flex items-center justify-center border-r border-[#999]"><svg class="w-[16px] h-[16px]" viewBox="0 0 16 16" fill="none" stroke="#333"><rect x="1.5" y="1.5" width="13" height="13" stroke-dasharray="1 1"/><path d="M8 4v8M4 8h8" stroke="#0a9a2a" stroke-width="2.4"/></svg></div>
          <div class="w-[25px] flex items-center justify-center border-r border-[#999]"><svg class="w-[18px] h-[17px]" viewBox="0 0 18 17" fill="#a8d8a0" stroke="#3a6a3a"><rect x="5" y="1" width="6" height="7"/><path d="M4 5a4 4 0 1 0 3 7" fill="none" stroke="#333"/><path d="M10 6v9l2-2 2 3 1-1-2-3h3z" fill="#fff" stroke="#222"/></svg></div>
          <div class="w-[24px] flex items-center justify-center"><svg class="w-[18px] h-[17px]" viewBox="0 0 18 17" fill="#a8d8a0" stroke="#2a6a2a"><rect x="1" y="1" width="8" height="14"/><path d="M6 5v9l2-2 2 3 1-1-2-3h3z" fill="#fff" stroke="#222"/><path d="M14 1l-3 4h3l-2 3 5-5h-3l2-2z" fill="#f5a623" stroke="#c47a00" stroke-width=".5"/></svg></div>
        </div>
      </div>
      <div class="flex mt-[6px] ml-[2px] h-[258px] overflow-hidden">
        <div class="w-[217px] text-[12px] text-[#222]">
          <div class="h-[19px] flex items-center justify-between px-[5px] bg-linear-to-b from-[#a4a4a4] to-[#808080] border-b border-[#777] font-bold text-[#111]">General<span class="w-0 h-0 border-x-[4px] border-x-transparent border-b-[4px] border-b-[#111] mr-[9px]"></span></div>
          <div class="ml-[17px] border-l border-[#9a9a9a]">
            <div class="flex h-[19px] border-b border-[#9a9a9a]"><div class="w-[89px] pl-[4px] flex items-center border-r border-[#9a9a9a]">Color</div><div class="flex-1 flex items-center pl-[3px] bg-white border-r border-[#9a9a9a]"><span class="w-[10px] h-[10px] bg-[#ff0000] border border-black mr-[6px]"></span>ByLayer</div></div>
            <div class="flex h-[19px] border-b border-[#9a9a9a]"><div class="w-[89px] pl-[4px] flex items-center border-r border-[#9a9a9a]">Layer</div><div class="flex-1 flex items-center pl-[2px] bg-white border-r border-[#9a9a9a]">Layer1</div></div>
            <div class="flex h-[19px] border-b border-[#9a9a9a]"><div class="w-[89px] pl-[4px] flex items-center border-r border-[#9a9a9a]">Linetype</div><div class="flex-1 flex items-center pl-[5px] bg-white border-r border-[#9a9a9a]"><span class="w-[44px] h-[1px] bg-black mr-[5px]"></span>ByLayer</div></div>
            <div class="flex h-[19px] border-b border-[#9a9a9a]"><div class="w-[89px] pl-[4px] flex items-center border-r border-[#9a9a9a] whitespace-nowrap">Linetype scale</div><div class="flex-1 flex items-center pl-[2px] bg-white border-r border-[#9a9a9a]">1</div></div>
            <div class="flex h-[19px] border-b border-[#9a9a9a]"><div class="w-[89px] pl-[4px] flex items-center border-r border-[#9a9a9a]">Plot style</div><div class="flex-1 flex items-center pl-[2px] bg-white border-r border-[#9a9a9a]">ByColor</div></div>
            <div class="flex h-[19px] border-b border-[#9a9a9a]"><div class="w-[89px] pl-[4px] flex items-center border-r border-[#9a9a9a]">Lineweight</div><div class="flex-1 flex items-center pl-[5px] bg-white border-r border-[#9a9a9a]"><span class="w-[45px] h-[2px] bg-black mr-[5px]"></span>ByLayer</div></div>
            <div class="flex h-[19px] border-b border-[#9a9a9a]"><div class="w-[89px] pl-[4px] flex items-center border-r border-[#9a9a9a]">Transparency</div><div class="flex-1 flex items-center pl-[2px] bg-white border-r border-[#9a9a9a]">50</div></div>
            <div class="flex h-[19px] border-b border-[#9a9a9a]"><div class="w-[89px] pl-[4px] flex items-center border-r border-[#9a9a9a]">Hyperlink</div><div class="flex-1 flex items-center pl-[2px] bg-white border-r border-[#9a9a9a]"></div></div>
            <div class="flex h-[19px] border-b border-[#9a9a9a]"><div class="w-[89px] pl-[4px] flex items-center border-r border-[#9a9a9a]">Thickness</div><div class="flex-1 flex items-center pl-[2px] bg-white border-r border-[#9a9a9a]">0</div></div>
          </div>
          <div class="h-[19px] mt-[4px] flex items-center justify-between px-[5px] bg-linear-to-b from-[#a4a4a4] to-[#808080] border-b border-[#777] font-bold text-[#111]">Geometry<span class="w-0 h-0 border-x-[4px] border-x-transparent border-b-[4px] border-b-[#111] mr-[9px]"></span></div>
          <div class="ml-[17px] border-l border-[#9a9a9a]">
            <div class="flex h-[19px] border-b border-[#9a9a9a]"><div class="w-[89px] pl-[4px] flex items-center border-r border-[#9a9a9a]">Vertex</div><div class="flex-1 flex items-center pl-[2px] bg-white border-r border-[#9a9a9a]">1</div></div>
            <div class="flex h-[19px] border-b border-[#9a9a9a]"><div class="w-[89px] pl-[4px] flex items-center border-r border-[#9a9a9a]">Vertex X</div><div class="flex-1 flex items-center pl-[2px] bg-white border-r border-[#9a9a9a]">2277.4989</div></div>
            <div class="flex h-[19px] border-b border-[#9a9a9a]"><div class="w-[89px] pl-[4px] flex items-center border-r border-[#9a9a9a]">Vertex Y</div><div class="flex-1 flex items-center pl-[2px] bg-white border-r border-[#9a9a9a]">2297.7923</div></div>
          </div>
        </div>
        <div class="w-[10px] ml-[8px] flex flex-col bg-[#dcdcdc]"><div class="h-[149px] bg-[#a8a8a8]"></div></div>
      </div>
    </div>
    <div class="flex-1 flex flex-col items-center pt-[5px]">
      <span class="text-[17px] leading-[14px] font-bold text-[#111]">✕</span>
      <svg class="w-[13px] h-[11px] mt-[5px]" viewBox="0 0 13 11" fill="#111"><path d="M5 1L0 5.5 5 10zM7 1l4.5 4.5L7 10z"/><path d="M11 0h2v11h-2z"/></svg>
      <svg class="w-[13px] h-[11px] mt-[6px]" viewBox="0 0 13 11" fill="#111" stroke="#111"><path d="M.5.5h12v10H.5z" fill="#fff"/><path d="M.5.5h12v3H.5zM2 5.5h4v2H2zM2 8.5h3M8 5.5h3M8 8.5h3" /></svg>
      <div class="mt-auto mb-[29px] [writing-mode:vertical-rl] rotate-180 text-[12px] text-[#222] font-['Liberation_Sans',sans-serif]">Properties</div>
    </div>
    <svg class="absolute right-[5px] bottom-[4px] w-[13px] h-[15px]" viewBox="0 0 13 15" fill="#fff" stroke="#333"><rect x=".5" y=".5" width="12" height="14"/><rect x="6" y="2" width="5" height="6" fill="#1a5fa8"/><path d="M2 11h9M2 9l-1 2 1 2" fill="none"/></svg>
  </div>
</div>

<!-- left window strip -->
<div class="absolute left-0 top-[30px] w-[2px] h-[446px] bg-linear-to-b from-[#a88a40] via-[#8a8a8a] to-[#c02020]"></div>
</div>
</body></html>
